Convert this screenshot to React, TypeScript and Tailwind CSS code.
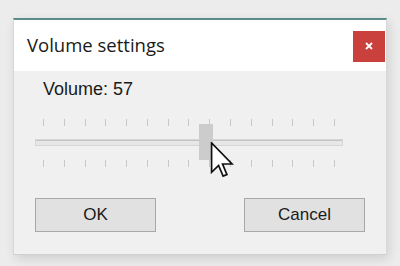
import React from "react";

const ticks = Array.from({ length: 15 }, (_, i) => i);

function TickRow() {
  return (
    <div className="flex justify-between px-[8px] h-[7px]">
      {ticks.map((i) => (
        <div key={i} className="w-px h-full bg-[#c8c8c8]" />
      ))}
    </div>
  );
}

export default function App() {
  return (
    <div className="w-[400px] h-[266px] bg-[#ececec] pt-[18px] pl-[13px] overflow-hidden relative" style={{ fontFamily: '"Liberation Sans", Arial, sans-serif' }}>
      <div className="w-[374px] h-[237px] flex flex-col border-t-2 border-t-[#5c8c8a] border-x border-x-[#d8d8d8] border-b border-b-[#d0d0d0] shadow-[2px_4px_10px_rgba(0,0,0,0.12)]">
        <div className="h-[51px] bg-white flex items-center justify-between pl-[13px] pr-[1px]">
          <span className="text-[18.5px] text-[#1a1a1a] leading-none" style={{ fontFamily: '"Open Sans", "Noto Sans", sans-serif' }}>
            Volume settings
          </span>
          <div className="w-[32px] h-[31px] bg-[#c9403c] flex items-center justify-center mt-[1px]">
            <svg width="8" height="8" viewBox="0 0 8 8">
              <path d="M1 1 L7 7 M7 1 L1 7" stroke="white" strokeWidth="1.8" />
            </svg>
          </div>
        </div>
        <div className="flex-1 bg-[#f0f0f0] flex flex-col pl-[21px] pr-[21px]">
          <div className="pt-[8px] pl-[8px] text-[18px] leading-[20px] text-[#1a1a1a]">Volume: 57</div>
          <div className="relative mt-[20px] w-[308px]">
            <TickRow />
            <div className="h-[13px]" />
            <div className="h-[7px] border border-[#d6d6d6] bg-[#e7e7e7] shadow-[inset_0_1px_0_#c4c4c4]" />
            <div className="h-[14px]" />
            <TickRow />
            <div className="absolute left-[164px] top-[5px] w-[14px] h-[36px] bg-[#cccccc]" />
          </div>
          <div className="flex justify-between mt-[31px]">
            <div className="w-[121px] h-[34px] border border-[#a8a8a8] bg-[#e1e1e1] flex items-center justify-center text-[17px] text-[#1a1a1a]">
              OK
            </div>
            <div className="w-[121px] h-[34px] border border-[#a8a8a8] bg-[#e1e1e1] flex items-center justify-center text-[17px] text-[#1a1a1a]">
              Cancel
            </div>
          </div>
        </div>
      </div>
      <svg className="absolute left-[210px] top-[142px]" width="24" height="36" viewBox="0 0 12 19">
        <path d="M0.5 0.5 L0.5 16 L4.2 12.4 L6.6 18 L8.6 17.2 L6.3 11.6 L11.3 11.6 Z" fill="white" stroke="#111" strokeWidth="0.9" strokeLinejoin="miter" />
      </svg>
    </div>
  );
}
